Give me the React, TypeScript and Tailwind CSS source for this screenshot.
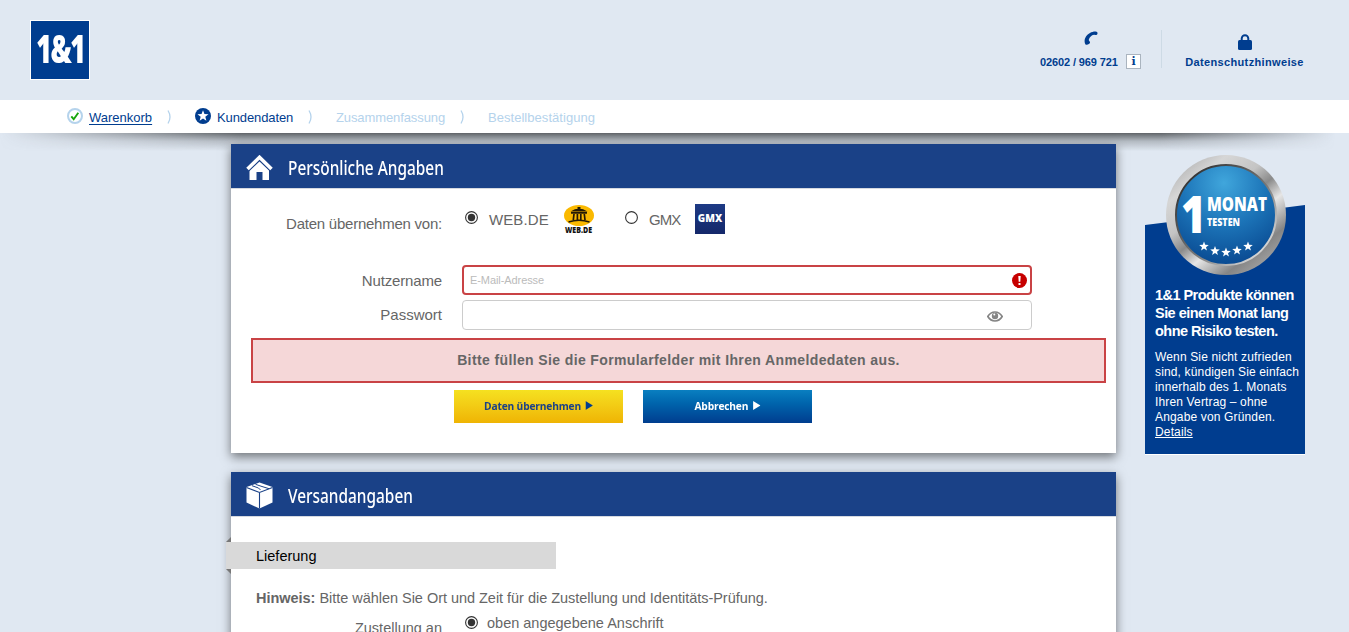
import type { ReactNode } from 'react';

function Logo() {
  return (
    <div className="flex h-[60px] w-[60px] items-center justify-center border border-white bg-[#003d8f] pb-1">
      <span className="inline-block scale-x-[0.7] whitespace-nowrap font-['Open_Sans',sans-serif] text-[38px] leading-none font-extrabold tracking-[-2px] text-white">1&amp;1</span>
    </div>
  );
}

function Star({ cx, cy, r }: { cx: number; cy: number; r: number }) {
  const points = Array.from({ length: 10 }, (_, i) => {
    const radius = i % 2 ? r * 0.42 : r;
    const a = (Math.PI / 5) * i - Math.PI / 2;
    return `${(cx + radius * Math.cos(a)).toFixed(2)},${(cy + radius * Math.sin(a)).toFixed(2)}`;
  }).join(' ');
  return <polygon points={points} fill="#fff" />;
}

function Header() {
  return (
    <header className="flex h-[100px] justify-between bg-[#e0e8f2] pl-[30px] pt-5">
      <Logo />
      <div className="flex pr-[45px] pt-[10px] text-[11px] leading-[14px] font-bold text-[#003d8f]">
        <div className="flex h-[38px] w-[122px] flex-col border-r border-[#cddae5]">
          <svg className="ml-[44px] mt-px shrink-0" width="14" height="14" viewBox="0 0 14 14" fill="#003d8f">
            <path d="M1.500 13.500C.2 11.600.2 8.300 2 5.500 4 2.500 8 .2 11.600.4c1.500.1 2 .900 1.900 2.100-.1 1-.8 1.600-1.800 1.500L10 3.700C7.600 3.900 4.900 6.800 4.800 9.200l.9 1.300c.6.9.3 1.600-.5 2.200-1.100 1-2.700 1.500-3.700.8z" />
          </svg>
          <div className="mt-2 flex h-4 items-center">
            <span className="w-[79px] pt-0.5 whitespace-nowrap tracking-[-0.12px]">02602 / 969 721</span>
            <span className="ml-[7px] flex h-[15px] w-[15px] shrink-0 items-center justify-center border border-[#aab4bf] bg-white font-['DejaVu_Serif',serif] text-[11px] leading-none">i</span>
          </div>
        </div>
        <div className="ml-[23px] flex w-[119px] flex-col items-center">
          <svg className="mt-1" width="14" height="17" viewBox="0 0 14 17">
            <path d="M3.700 8V4.500a3.300 3.300 0 0 1 6.600 0V8" fill="none" stroke="#003d8f" strokeWidth="2" />
            <rect x="0" y="6" width="14" height="10" rx="1.500" fill="#003d8f" />
          </svg>
          <span className="mt-1 whitespace-nowrap tracking-[0.35px]">Datenschutzhinweise</span>
        </div>
      </div>
    </header>
  );
}

function Chevron({ className }: { className: string }) {
  return (
    <svg className={className} width="5" height="14" viewBox="0 0 5 14">
      <path d="M1 .5Q5 7 1 13.500" fill="none" stroke="#b5d3ec" strokeWidth="1.300" />
    </svg>
  );
}

function Steps() {
  return (
    <nav className="relative flex h-[33px] items-center bg-white pl-[67px] text-[13px] leading-[17px] text-[#003d8f]">
      <div className="absolute inset-x-0 top-full h-[18px] bg-linear-to-b from-[#606468] via-[#606468]/35 via-45% to-transparent mask-[linear-gradient(to_right,transparent_0,black_18%,black_86%,transparent_99%)]" />
      <svg className="-mt-px" width="16" height="16" viewBox="0 0 16 16">
        <circle cx="8" cy="8" r="7" fill="#fff" stroke="#b5d3ec" strokeWidth="2" />
        <path d="m4.300 8.300 2.400 2.900 4.600-6.500" fill="none" stroke="#17a60b" strokeWidth="1.900" />
      </svg>
      <a className="ml-1.5 w-16 whitespace-nowrap pt-0.5 underline underline-offset-2">Warenkorb</a>
      <Chevron className="ml-[14px]" />
      <svg className="-mt-px ml-[23px]" width="16" height="16" viewBox="0 0 16 16">
        <circle cx="8" cy="8" r="8" fill="#003d8f" />
        <Star cx={8} cy={8} r={5.8} />
      </svg>
      <span className="ml-1.5 w-[77px] whitespace-nowrap pt-0.5 tracking-[-0.1px]">Kundendaten</span>
      <Chevron className="ml-[14px]" />
      <span className="ml-[23px] w-[110px] whitespace-nowrap pt-0.5 tracking-[-0.1px] text-[#b5d3ec]">Zusammenfassung</span>
      <Chevron className="ml-[14px]" />
      <span className="ml-[23px] whitespace-nowrap pt-0.5 tracking-[0.04px] text-[#b5d3ec]">Bestellbestätigung</span>
    </nav>
  );
}

function Panel({ title, icon, className, children }: { title: string; icon: ReactNode; className: string; children: ReactNode }) {
  return (
    <section className={`w-[885px] bg-white shadow-[0_4px_10px_rgba(0,0,0,0.5)] ${className}`}>
      <h2 className="flex h-11 items-center bg-[#1a4187] pl-[15px]">
        {icon}
        <span className="ml-[15px] inline-block origin-left scale-x-[0.77] whitespace-nowrap pt-1 font-['Noto_Sans',sans-serif] text-[20px] leading-6 font-medium text-white">{title}</span>
      </h2>
      <div className="border-t border-[#d5d9e0]">{children}</div>
    </section>
  );
}

function HomeIcon() {
  return (
    <svg className="mt-1" width="27" height="26" viewBox="0 0 27 26">
      <path d="M3.500 15 13.500 6 23 15v10h-6.500v-8h-6v8h-7z" fill="#fff" />
      <path d="M1.500 14.500 13.500 3l12 11.500" fill="none" stroke="#1a4187" strokeWidth="5" />
      <path d="M1.500 14 13.500 2.300 25.500 14" fill="none" stroke="#fff" strokeWidth="3.600" />
    </svg>
  );
}

function BoxIcon() {
  return (
    <svg className="mt-[3px]" width="27" height="27" viewBox="0 0 27 27">
      <path d="M13.500.5 26.500 5v15.500l-13 6-13-6V5z" fill="#fff" />
      <path d="M.5 5.500 13.500 10.500l13-5M13.500 10.500v16" fill="none" stroke="#1a4187" strokeWidth="1.100" />
      <path d="m6 3.700 6.500 2.300 2 2M9.500 2.300 15 4.200l8 2.500" fill="none" stroke="#1a4187" strokeWidth="1" />
    </svg>
  );
}

function Radio({ checked = false }: { checked?: boolean }) {
  return (
    <svg width="13" height="13" viewBox="0 0 13 13">
      <circle cx="6.500" cy="6.500" r="5.900" fill="#fff" stroke="#333" strokeWidth="1.100" />
      {checked && <circle cx="6.500" cy="6.500" r="3.700" fill="#333" />}
    </svg>
  );
}

function WebDeLogo() {
  return (
    <svg className="overflow-visible" width="30" height="32" viewBox="0 0 30 32">
      <ellipse cx="15" cy="11.500" rx="15" ry="10.500" fill="#fab900" />
      <path d="M6.500 7.500Q11 4.500 15 4.500t8.500 3zM13.500 3h3v2h-3z" fill="#241a05" />
      <path d="M7 8.800h16M10 10 9.300 16M13.400 10v6M16.800 10v6M20.300 10l.7 6M4.500 18q10.500-3.500 21 0" fill="none" stroke="#241a05" strokeWidth="1.700" />
      <text x="1" y="29" textLength="27" lengthAdjust="spacingAndGlyphs" fill="#111" className="font-['Open_Sans',sans-serif] text-[8px] font-extrabold">WEB.DE</text>
    </svg>
  );
}

function Button({ label, className, arrow }: { label: string; className: string; arrow: string }) {
  return (
    <button className={`flex h-[33px] w-[169px] items-center justify-center bg-linear-to-b ${className}`}>
      <span className="flex scale-x-[0.93] items-center pb-0.5">
        <span className="whitespace-nowrap font-['Open_Sans',sans-serif] text-[11px] font-bold tracking-[-0.2px]">{label}</span>
        <svg className="ml-[5px]" width="8" height="9" viewBox="0 0 8 9">
          <path d="M0 0v9l8-4.500z" className={arrow} />
        </svg>
      </span>
    </button>
  );
}

function PersonalForm() {
  return (
    <div className="h-[264px] text-[15px] leading-[18px] text-[#666]">
      <div className="flex h-[76px]">
        <div className="w-[211px] whitespace-nowrap pt-[26px] text-right tracking-[-0.24px]">Daten übernehmen von:</div>
        <div className="ml-[23px] pt-[22px]"><Radio checked /></div>
        <div className="ml-[11px] w-[60px] whitespace-nowrap pt-[22px] tracking-[0.1px]">WEB.DE</div>
        <div className="ml-[15px] pt-[15px]"><WebDeLogo /></div>
        <div className="ml-[31px] pt-[22px]"><Radio /></div>
        <div className="ml-[11px] w-8 whitespace-nowrap pt-[22px] tracking-[-1px]">GMX</div>
        <div className="ml-[14px] mt-[15px] flex h-[30px] w-[30px] items-center justify-center bg-linear-to-b from-[#1d3a85] to-[#14286a] pb-0.5">
          <span className="font-['Open_Sans',sans-serif] text-[10px] leading-none font-extrabold text-white">GMX</span>
        </div>
      </div>
      <div className="flex h-[35px]">
        <div className="w-[211px] pt-[7px] text-right tracking-[-0.15px]">Nutzername</div>
        <div className="ml-5 flex h-[30px] w-[570px] items-center justify-between rounded-[4px] border-2 border-[#c94345] pl-[6px] pr-[3px]">
          <span className="text-[11px] tracking-[-0.08px] text-[#bbb]">E-Mail-Adresse</span>
          <svg width="15" height="15" viewBox="0 0 15 15">
            <circle cx="7.500" cy="7.500" r="7.500" fill="#c60000" />
            <path d="M6.300 3h2.400l-.4 5.800H6.700zM6.500 10h2v2h-2z" fill="#fff" />
          </svg>
        </div>
      </div>
      <div className="flex h-[38px]">
        <div className="w-[211px] pt-[6px] text-right">Passwort</div>
        <div className="ml-5 flex h-[30px] w-[570px] items-center justify-end rounded-[4px] border border-[#ccc] pr-7 pt-[3px]">
          <svg width="16" height="11" viewBox="0 0 16 11">
            <path d="M.8 5.500C4.500-.5 11.500-.5 15.200 5.500 11.500 11.500 4.500 11.500.8 5.500z" fill="#fff" stroke="#858585" strokeWidth="1.700" />
            <circle cx="8" cy="5" r="3.200" fill="#858585" />
            <circle cx="7.300" cy="3.600" r="1" fill="#fff" />
          </svg>
        </div>
      </div>
      <div className="ml-5 flex h-[45px] w-[855px] items-center justify-center border-2 border-[#c94345] bg-[#f5d7d8] pb-0.5 text-[14px] font-bold tracking-[0.38px]">
        Bitte füllen Sie die Formularfelder mit Ihren Anmeldedaten aus.
      </div>
      <div className="mt-[7px] flex gap-5 pl-[223px]">
        <Button label="Daten übernehmen" className="from-[#f5e120] to-[#efb403] text-[#1a4187]" arrow="fill-[#003d8f]" />
        <Button label="Abbrechen" className="from-[#0a7fc0] to-[#003d8f] text-white" arrow="fill-white" />
      </div>
    </div>
  );
}

function ShippingForm() {
  return (
    <div className="h-[150px] pt-[25px] text-[15px] leading-[18px] text-[#666]">
      <div className="relative -ml-[5px] flex h-[27px] w-[330px] items-center bg-[#d9d9d9] pl-[30px] text-[14.500px] text-black">
        <svg className="absolute -top-[5px] left-0" width="5" height="5"><path d="M5 0v5H0z" fill="#777" /></svg>
        Lieferung
        <svg className="absolute -bottom-[5px] left-0" width="5" height="5"><path d="M0 0h5v5z" fill="#777" /></svg>
      </div>
      <p className="mt-5 pl-[25px] text-[14.500px] tracking-[-0.03px]"><b>Hinweis:</b> Bitte wählen Sie Ort und Zeit für die Zustellung und Identitäts-Prüfung.</p>
      <div className="mt-[9px] flex text-[14.500px]">
        <div className="w-[211px] pt-[3px] text-right">Zustellung an</div>
        <div className="ml-[23px]"><Radio checked /></div>
        <div className="ml-[9px] -mt-0.5">oben angegebene Anschrift</div>
      </div>
    </div>
  );
}

function Badge() {
  return (
    <svg width="160" height="125" viewBox="0 0 160 125">
      <defs>
        <linearGradient id="ring" x1="0.1" y1="0" x2="0.9" y2="1">
          <stop offset="0" stopColor="#a8a8a8" />
          <stop offset=".2" stopColor="#d6d6d6" />
          <stop offset=".38" stopColor="#c4c4c4" />
          <stop offset=".5" stopColor="#8a8a8a" />
          <stop offset=".62" stopColor="#e6e6e6" />
          <stop offset=".8" stopColor="#858585" />
          <stop offset="1" stopColor="#b5b5b5" />
        </linearGradient>
        <linearGradient id="rim" x1="0" y1="0" x2="1" y2="1">
          <stop offset="0" stopColor="#222" />
          <stop offset=".55" stopColor="#777" />
          <stop offset="1" stopColor="#fff" />
        </linearGradient>
        <radialGradient id="disc" cx=".48" cy=".18" r=".85">
          <stop offset="0" stopColor="#40a6dc" />
          <stop offset=".5" stopColor="#1c74b8" />
          <stop offset="1" stopColor="#08478f" />
        </radialGradient>
      </defs>
      <path d="M0 70 160 50v75H0z" fill="#003d8f" />
      <circle cx="81" cy="60" r="60" fill="url(#ring)" />
      <circle cx="81" cy="60" r="50" fill="url(#disc)" stroke="url(#rim)" strokeWidth="2" />
      <text x="36" y="78" textLength="25" lengthAdjust="spacingAndGlyphs" fill="#fff" className="font-['Open_Sans',sans-serif] text-[52px] font-extrabold">1</text>
      <text x="62" y="56" textLength="60" lengthAdjust="spacingAndGlyphs" fill="#fff" className="font-['Open_Sans',sans-serif] text-[20px] font-extrabold">MONAT</text>
      <text x="62" y="71" textLength="33" lengthAdjust="spacingAndGlyphs" fill="#fff" className="font-['Open_Sans',sans-serif] text-[11px] font-extrabold">TESTEN</text>
      <Star cx={59} cy={91.5} r={5} />
      <Star cx={70} cy={96} r={5} />
      <Star cx={81} cy={97.5} r={5} />
      <Star cx={92} cy={95.5} r={5} />
      <Star cx={103} cy={91.5} r={5} />
    </svg>
  );
}

function Sidebar() {
  return (
    <aside className="ml-[29px] mt-[22px] w-40 text-white">
      <Badge />
      <div className="h-[175px] border-b border-white bg-[#003d8f] pl-2.5 pt-[6px]">
        <h3 className="whitespace-nowrap text-[14.500px] leading-[18px] font-bold tracking-[-0.54px]">1&amp;1 Produkte können<br />Sie einen Monat lang<br />ohne Risiko testen.</h3>
        <p className="mt-[10px] whitespace-nowrap text-[12px] leading-[15px] tracking-[0.15px]">
          Wenn Sie nicht zufrieden<br />sind, kündigen Sie einfach<br />innerhalb des 1. Monats<br />Ihren Vertrag – ohne<br />Angabe von Gründen.<br /><a className="underline">Details</a>
        </p>
      </div>
    </aside>
  );
}

export default function App() {
  return (
    <div className="h-[632px] w-[1349px] overflow-hidden bg-[#e0e8f2] font-['Liberation_Sans',Arial,sans-serif]">
      <Header />
      <Steps />
      <div className="flex items-start pl-[231px]">
        <main className="relative">
          <Panel title="Persönliche Angaben" icon={<HomeIcon />} className="mt-[11px]"><PersonalForm /></Panel>
          <Panel title="Versandangaben" icon={<BoxIcon />} className="mt-[19px]"><ShippingForm /></Panel>
        </main>
        <Sidebar />
      </div>
    </div>
  );
}
